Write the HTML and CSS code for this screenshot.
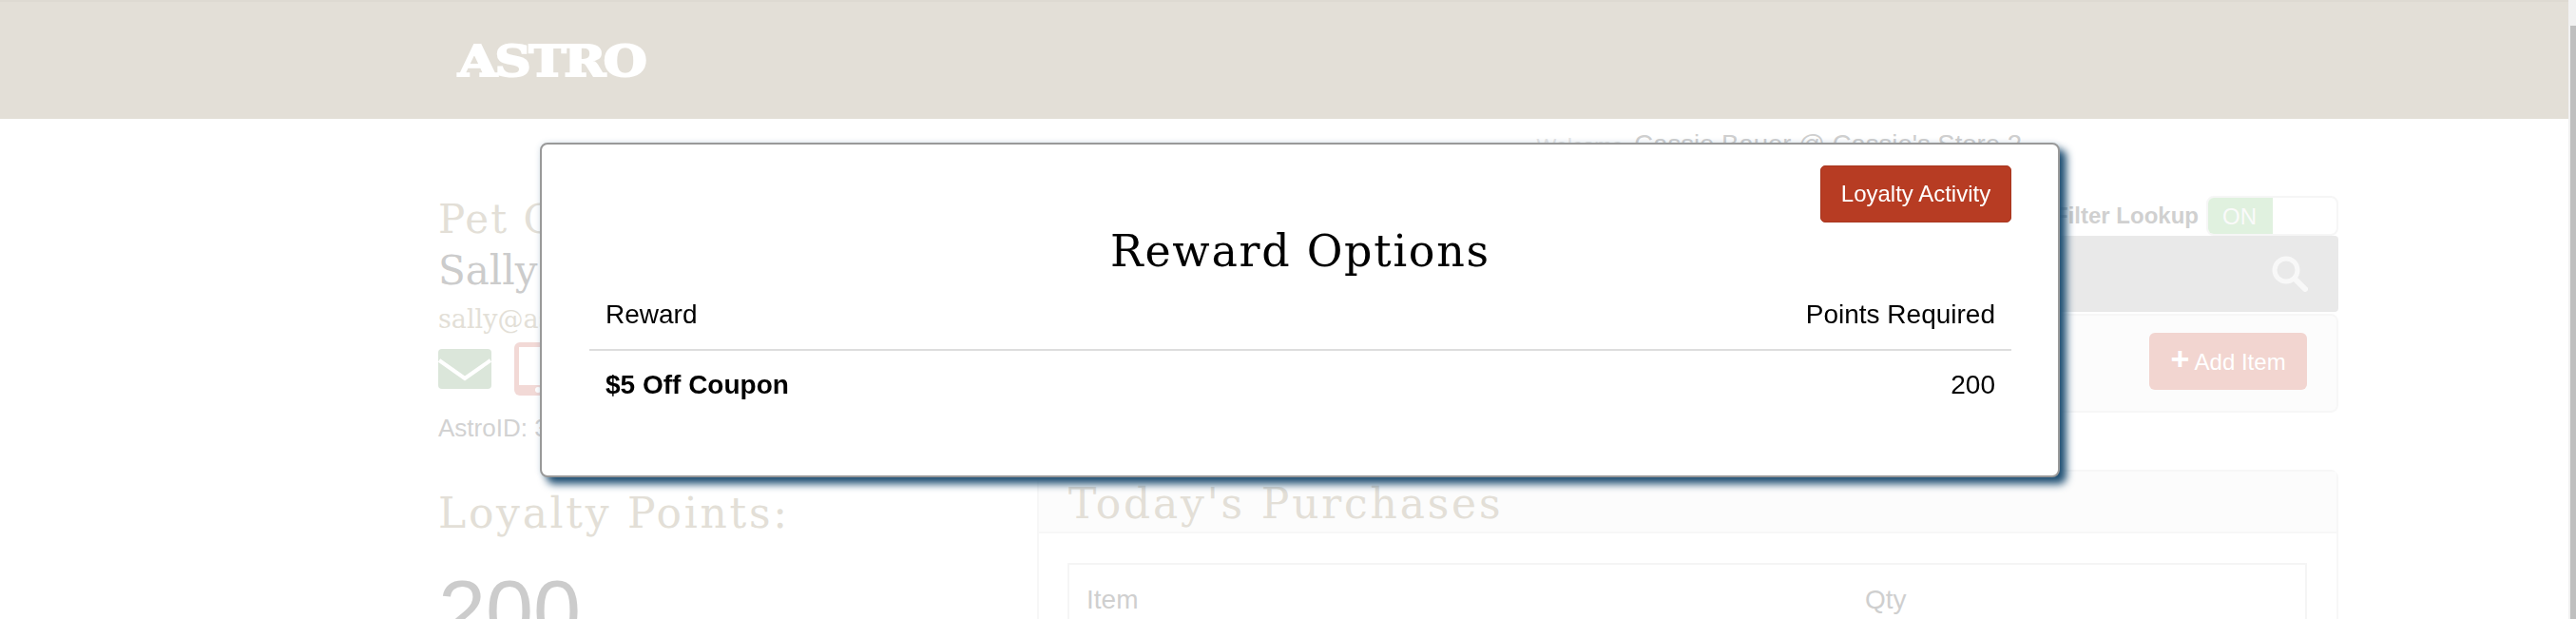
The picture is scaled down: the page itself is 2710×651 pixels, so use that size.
FILE: index.html
```html
<!DOCTYPE html>
<html lang="en">
<head>
    <meta charset="UTF-8">
    <meta name="viewport" content="width=device-width, initial-scale=1.0">
    <title>Astro - Reward Options</title>
    <link rel="stylesheet" href="styles.css">
</head>
<body>
    <div class="page">
        <header class="topbar">
            <div class="logo">ASTRO</div>
        </header>

        <div class="welcome"><span class="welcome-label">Welcome</span> Cassie Bauer @ Cassie's Store 2</div>

        <main class="layout">
            <section class="customer">
                <h2 class="customer-title">Pet Owner</h2>
                <div class="customer-name">Sally Smith</div>
                <div class="customer-email">sally@astro.com</div>
                <div class="contact-icons">
                    <svg class="icon-mail" viewBox="0 0 56 42" aria-hidden="true">
                        <rect width="56" height="42" rx="4" fill="#dbe6da"/>
                        <path d="M1 12 L28 31 L55 12" fill="none" stroke="#fff" stroke-width="4"/>
                    </svg>
                    <svg class="icon-phone" viewBox="0 0 50 56" aria-hidden="true">
                        <rect width="50" height="56" rx="6" fill="#f2d9d6"/>
                        <rect x="5" y="5" width="40" height="40" fill="#fff"/>
                        <circle cx="25" cy="50" r="3" fill="#fff"/>
                    </svg>
                </div>
                <div class="astro-id">AstroID: 3021</div>
                <h2 class="points-title">Loyalty Points:</h2>
                <div class="points-value">200</div>
            </section>

            <section class="work">
                <div class="filter-row">
                    <span class="filter-label">Filter Lookup</span>
                    <div class="toggle"><span class="toggle-on">ON</span></div>
                </div>
                <div class="search-bar">
                    <svg class="icon-search" viewBox="0 0 38 38" aria-hidden="true">
                        <circle cx="15" cy="15" r="12" fill="none" stroke="#f8f8f8" stroke-width="5"/>
                        <path d="M24 24 L35 35" fill="none" stroke="#f8f8f8" stroke-width="6" stroke-linecap="round"/>
                    </svg>
                </div>
                <div class="add-panel">
                    <button class="add-btn" type="button"><b>+</b> Add Item</button>
                </div>
                <div class="purchases">
                    <h2 class="purchases-title">Today's Purchases</h2>
                    <div class="purchases-body">
                        <div class="purchases-table">
                            <span class="col-item">Item</span>
                            <span class="col-qty">Qty</span>
                        </div>
                    </div>
                </div>
            </section>
        </main>
    </div>

    <div class="scrollbar"><div class="scrollbar-thumb"></div></div>

    <div class="modal">
        <div class="modal-actions">
            <button class="activity-btn" type="button">Loyalty Activity</button>
        </div>
        <h1 class="modal-title">Reward Options</h1>
        <table class="rewards">
            <thead>
                <tr><th>Reward</th><th>Points Required</th></tr>
            </thead>
            <tbody>
                <tr><td>$5 Off Coupon</td><td>200</td></tr>
            </tbody>
        </table>
    </div>
</body>
</html>
```

FILE: styles.css
```css
* {
    box-sizing: border-box;
}
html, body {
    height: 100%;
}
body {
    margin: 0;
    overflow: hidden;
    background-color: white;
    font-family: "Liberation Sans", Arial, sans-serif;
}
.page {
    margin-right: 8px;
    height: 651px;
    overflow: hidden;
}

/* header */
.topbar {
    height: 125px;
    padding: 41px 0 0 482px;
    background-color: #e3dfd7;
    border-top: 2px solid #dedad2;
}
.logo {
    display: inline-block;
    font-family: "DejaVu Serif", serif;
    font-weight: bold;
    font-size: 44px;
    line-height: 44px;
    letter-spacing: -2px;
    color: white;
    -webkit-text-stroke: 2px white;
    transform: scaleX(1.2);
    transform-origin: left center;
}
.welcome {
    height: 80px;
    padding: 12px 575px 0 0;
    text-align: right;
    font-size: 27.5px;
    line-height: 30px;
    color: #cfcfcf;
}
.welcome-label {
    margin-right: 4px;
    font-size: 22px;
    color: #e6e6e6;
}

/* page columns */
.layout {
    display: grid;
    grid-template-columns: 630px 1369px;
    margin-left: 461px;
}

.customer-title, .points-title, .purchases-title {
    margin: 0;
    font-family: "DejaVu Serif", serif;
    font-weight: normal;
    color: #e3dfd7;
}
.customer-title {
    padding-top: 2px;
    font-size: 42px;
    line-height: 48px;
    letter-spacing: 2px;
}
.customer-name {
    margin-top: 5px;
    font-family: "DejaVu Serif", serif;
    font-size: 42px;
    line-height: 50px;
    color: #cccccc;
}
.customer-email {
    margin-top: 8px;
    font-family: "DejaVu Serif", serif;
    font-size: 27px;
    line-height: 36px;
    color: #e3dfd7;
}
.contact-icons {
    display: flex;
    align-items: flex-start;
    gap: 24px;
    margin-top: 6px;
}
.icon-mail {
    width: 56px;
    height: 42px;
    margin-top: 7px;
}
.icon-phone {
    width: 50px;
    height: 56px;
}
.astro-id {
    margin-top: 19px;
    font-size: 26px;
    line-height: 30px;
    color: #d2d2d2;
}
.points-title {
    margin-top: 49px;
    font-size: 44px;
    line-height: 52px;
    letter-spacing: 2.7px;
}
.points-value {
    margin-top: 27px;
    font-size: 90px;
    line-height: 100px;
    color: #cccccc;
}

/* right column */
.filter-row {
    display: flex;
    justify-content: flex-end;
    align-items: center;
    gap: 8px;
    height: 43px;
}
.filter-label {
    font-size: 24px;
    font-weight: bold;
    color: #d0d0d0;
}
.toggle {
    width: 139px;
    height: 42px;
    border: 2px solid #f6f6f6;
    border-radius: 8px;
    overflow: hidden;
}
.toggle-on {
    display: block;
    width: 68px;
    height: 38px;
    padding-left: 15px;
    background-color: #e0f1df;
    font-size: 24px;
    line-height: 40px;
    color: #fafafa;
}
.search-bar {
    display: flex;
    justify-content: flex-end;
    align-items: center;
    height: 80px;
    padding-right: 32px;
    background-color: #e9e9e9;
    border-radius: 4px;
}
.icon-search {
    width: 38px;
    height: 38px;
}
.add-panel {
    display: flex;
    justify-content: flex-end;
    height: 104px;
    margin-top: 2px;
    padding: 18px 31px 0 0;
    background-color: #fcfcfc;
    border: 2px solid #f7f7f7;
    border-radius: 8px;
}
.add-btn {
    width: 166px;
    height: 60px;
    padding: 0;
    background-color: #f2d5d0;
    border: none;
    border-radius: 6px;
    font-family: inherit;
    font-size: 24px;
    color: white;
}
.add-btn b {
    font-size: 34px;
    line-height: 24px;
}
.purchases {
    margin-top: 60px;
    height: 300px;
    border: 2px solid #f7f7f7;
    border-radius: 8px;
}
.purchases-title {
    height: 65px;
    padding: 8px 0 0 31px;
    background-color: #fcfcfc;
    border-bottom: 2px solid #f7f7f7;
    font-size: 44px;
    line-height: 52px;
    letter-spacing: 2.8px;
}
.purchases-body {
    padding: 31px 31px 0 30px;
}
.purchases-table {
    display: grid;
    grid-template-columns: 819px 1fr;
    height: 200px;
    padding: 22px 0 0 18px;
    border: 2px solid #f5f5f5;
    font-size: 28px;
    line-height: 30px;
    color: #cfcfcf;
}

/* fake page scrollbar */
.scrollbar {
    position: fixed;
    top: 0;
    right: 0;
    bottom: 0;
    width: 8px;
    padding: 27px 0 0 2px;
    background-color: #f1f1f1;
}
.scrollbar-thumb {
    height: 100%;
    background-color: #bfbfbf;
}

/* dialog */
.modal {
    position: fixed;
    top: 150px;
    left: 568px;
    width: 1599px;
    height: 352px;
    padding: 22px 49px 0 50px;
    background-color: white;
    border: 2px solid #999999;
    border-radius: 8px;
    box-shadow: 7px 7px 9px #1f4f73, 0 0 6px rgba(36, 88, 126, 0.15);
}
.modal-actions {
    display: flex;
    justify-content: flex-end;
}
.activity-btn {
    width: 201px;
    height: 60px;
    padding: 0;
    background-color: #b73c23;
    border: 1px solid #a83720;
    border-radius: 5px;
    font-family: inherit;
    font-size: 24px;
    color: white;
}
.modal-title {
    margin: 0;
    height: 74px;
    padding-top: 3px;
    font-family: "DejaVu Serif", serif;
    font-weight: normal;
    font-size: 46px;
    line-height: 54px;
    letter-spacing: 1.7px;
    text-align: center;
    color: black;
}
.rewards {
    width: 100%;
    border-collapse: collapse;
    font-size: 28px;
    color: black;
}
.rewards th, .rewards td {
    padding: 0 17px;
    text-align: left;
}
.rewards th {
    height: 60px;
    padding-bottom: 13px;
    font-weight: normal;
    border-bottom: 2px solid #dddddd;
}
.rewards td {
    height: 72px;
}
.rewards td:first-child {
    font-weight: bold;
}
.rewards th:last-child, .rewards td:last-child {
    text-align: right;
}
```
